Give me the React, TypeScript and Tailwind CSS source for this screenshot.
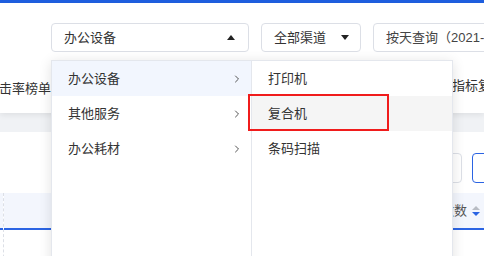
import { ChevronRight } from 'lucide-react'

const firstLevel = [
  { label: '办公设备', active: true },
  { label: '其他服务', active: false },
  { label: '办公耗材', active: false },
]

const secondLevel = [
  { label: '打印机', hover: false },
  { label: '复合机', hover: true },
  { label: '条码扫描', hover: false },
]

function Caret({ up }: { up?: boolean }) {
  return (
    <svg width="8" height="5" viewBox="0 0 8 5" className={up ? '' : 'rotate-180'}>
      <path d="M0 5 L4 0 L8 5 Z" fill="#222" />
    </svg>
  )
}

function SortIcon() {
  return (
    <svg width="8" height="12" viewBox="0 0 8 12">
      <path d="M0 5 L4 1 L8 5 Z" fill="#b8bcc4" />
      <path d="M0 7 L4 11 L8 7 Z" fill="#2b64e3" />
    </svg>
  )
}

export default function App() {
  return (
    <div
      className="relative w-[484px] h-[256px] overflow-hidden bg-[#f0f2f5] text-[#333] text-[13px]"
      style={{ fontFamily: '"Liberation Sans", "Noto Sans CJK SC", sans-serif' }}
    >
      <div className="h-[3px] bg-[#1f5fe0]" />

      {/* top card */}
      <div className="h-[110px] bg-white shadow-[0_2px_6px_rgba(0,0,0,0.08)]">
        <div className="flex gap-3 pt-[20px] pl-[51px]">
          <div className="shrink-0 flex items-center justify-between w-[198px] h-[29px] px-3 border border-[#dcdfe6] rounded">
            <span>办公设备</span>
            <span className="mr-[1px]"><Caret up /></span>
          </div>
          <div className="shrink-0 flex items-center justify-between w-[100px] h-[29px] pl-3 pr-[11px] border border-[#dcdfe6] rounded">
            <span>全部渠道</span>
            <Caret />
          </div>
          <div className="shrink-0 flex items-center w-[200px] h-[29px] px-3 border border-[#dcdfe6] rounded whitespace-nowrap text-[#444]">
            按天查询（2021-02-01）
          </div>
        </div>
        <div className="flex justify-between items-center mt-[27px] whitespace-nowrap">
          <span className="-ml-[1px]">击率榜单</span>
          <span className="-mr-[20px] -mt-[6px]">指标复杂</span>
        </div>
      </div>

      {/* bottom card */}
      <div className="mt-[19px] h-[200px] bg-white">
        <div className="flex justify-end gap-[10px] pt-[21px]">
          <div className="shrink-0 w-[80px] h-[30px] border border-[#dcdfe6] rounded" />
          <div className="shrink-0 w-[30px] h-[30px] border border-[#2b64e3] rounded -mr-[18px]" />
        </div>
        <div className="flex mt-[10px] h-[80px]">
          <div className="w-[3px] shrink-0">
            <div className="h-[37px] bg-[#f3f6fd] border-b-2 border-[#2b64e3]" />
          </div>
          <div className="flex-1 border-l border-dashed border-[#dcdfe6]">
            <div className="h-[37px] bg-[#f3f6fd] border-b-2 border-[#2b64e3] flex items-center justify-end pr-[4px] text-[#555]">
              <span className="mr-[5px]">激数</span>
              <SortIcon />
            </div>
          </div>
        </div>
      </div>

      {/* cascader dropdown */}
      <div className="absolute left-[51px] top-[60px] flex bg-white border border-[#e4e7ed] shadow-[0_2px_12px_rgba(0,0,0,0.12)] h-[220px]">
        <ul className="w-[200px] border-r border-[#e4e7ed]">
          {firstLevel.map((item) => (
            <li
              key={item.label}
              className={`flex items-center justify-between h-[35px] pl-[16px] pr-[8px] ${item.active ? 'bg-[#f2f6fe]' : ''}`}
            >
              <span>{item.label}</span>
              <ChevronRight size={12} strokeWidth={2} className="text-[#555]" />
            </li>
          ))}
        </ul>
        <ul className="relative w-[200px]">
          {secondLevel.map((item) => (
            <li
              key={item.label}
              className={`flex items-center h-[35px] pl-[16px] ${item.hover ? 'bg-[#f5f5f5]' : ''}`}
            >
              {item.label}
            </li>
          ))}
          {/* annotation box */}
          <li className="absolute left-[-4px] top-[33px] w-[141px] h-[37px] border-2 border-[#f01c1c]" />
        </ul>
      </div>
    </div>
  )
}
